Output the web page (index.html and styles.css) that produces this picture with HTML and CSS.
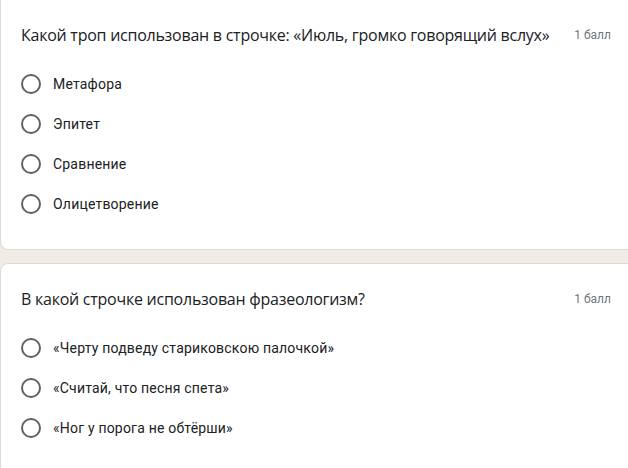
FILE: index.html
```html
<!DOCTYPE html>
<html lang="ru">
<head>
<meta charset="utf-8">
<link rel="stylesheet" href="styles.css">
</head>
<body>
<div class="page">
  <div class="card card-first">
    <div class="q-head">
      <div class="q-title">Какой троп использован в строчке: «Июль, громко говорящий вслух»</div>
      <div class="q-points">1 балл</div>
    </div>
    <div class="options">
      <div class="option"><span class="radio"></span><span class="label">Метафора</span></div>
      <div class="option"><span class="radio"></span><span class="label">Эпитет</span></div>
      <div class="option"><span class="radio"></span><span class="label">Сравнение</span></div>
      <div class="option"><span class="radio"></span><span class="label">Олицетворение</span></div>
    </div>
  </div>
  <div class="card">
    <div class="q-head">
      <div class="q-title">В какой строчке использован фразеологизм?</div>
      <div class="q-points">1 балл</div>
    </div>
    <div class="options">
      <div class="option"><span class="radio"></span><span class="label">«Черту подведу стариковскою палочкой»</span></div>
      <div class="option"><span class="radio"></span><span class="label">«Считай, что песня спета»</span></div>
      <div class="option"><span class="radio"></span><span class="label">«Ног у порога не обтёрши»</span></div>
    </div>
  </div>
</div>
</body>
</html>
```

FILE: styles.css
```css
html, body {
  margin: 0;
  padding: 0;
  background: #efece6;
  overflow: hidden;
}
.page {
  display: flex;
  flex-direction: column;
  gap: 13px;
  margin-right: -14px;
}
.card {
  background: #ffffff;
  border: 1px solid #dcdad6;
  border-radius: 8px;
  padding: 23px 30px 25px 20px;
}
.card-first {
  border-top: none;
  border-top-left-radius: 0;
  border-top-right-radius: 0;
  padding-top: 23px;
  padding-bottom: 25px;
}
.q-head {
  display: flex;
  justify-content: space-between;
  align-items: center;
  height: 24px;
}
.q-title {
  font-family: "Open Sans", "Noto Sans", sans-serif;
  font-size: 16px;
  color: #202124;
  line-height: 24px;
  letter-spacing: -0.25px;
}
.q-points {
  font-family: Roboto, "Liberation Sans", sans-serif;
  font-size: 12px;
  color: #70757a;
  line-height: 16px;
  margin-left: 20px;
}
.options {
  display: flex;
  flex-direction: column;
  margin-top: 17px;
}
.option {
  display: flex;
  align-items: center;
  height: 40px;
}
.radio {
  box-sizing: border-box;
  width: 20px;
  height: 20px;
  border: 2px solid #5f6368;
  border-radius: 50%;
  margin-right: 12px;
  flex: none;
}
.label {
  font-family: Roboto, "Liberation Sans", sans-serif;
  font-size: 14px;
  color: #202124;
  letter-spacing: 0.2px;
}
```
